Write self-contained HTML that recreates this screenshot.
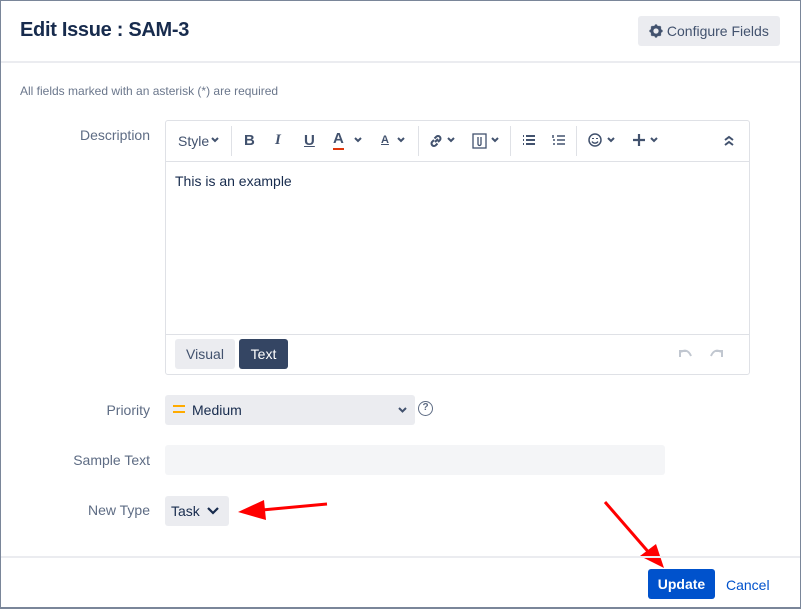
<!DOCTYPE html>
<html><head><style>
*{box-sizing:border-box;margin:0;padding:0}
body{width:801px;height:609px;background:#fff;font-family:"Liberation Sans",sans-serif;color:#172b4d;position:relative;overflow:hidden}
.a{position:absolute}
.lbl{position:absolute;right:651px;font-size:14px;color:#5e6c84;text-align:right}
.ic{position:absolute;top:132px;font-size:15px;color:#42526e;font-weight:bold}
.sep{position:absolute;top:126px;width:1px;height:30px;background:#dfe1e6}
svg.t{position:absolute;top:133px}
svg.t *{fill:none;stroke:#42526e;stroke-width:2}
</style></head><body>
<div class="a" style="left:20px;top:19px;font-size:20px;font-weight:bold;color:#172b4d;letter-spacing:-0.3px">Edit Issue : SAM-3</div>
<div class="a" style="left:638px;top:16px;width:142px;height:30px;background:#ebecf0;border-radius:3px;font-size:14px;color:#42526e;line-height:30px;padding-left:11px">
<svg width="14" height="14" viewBox="0 0 16 16" style="vertical-align:-2px"><circle cx="8" cy="8" r="5" fill="none" stroke="#42526e" stroke-width="3"/><g stroke="#42526e" stroke-width="2.5"><line x1="8" y1="0.5" x2="8" y2="15.5"/><line x1="0.5" y1="8" x2="15.5" y2="8"/><line x1="2.7" y1="2.7" x2="13.3" y2="13.3"/><line x1="13.3" y1="2.7" x2="2.7" y2="13.3"/></g><circle cx="8" cy="8" r="3" fill="#ebecf0"/></svg> Configure Fields</div>
<div class="a" style="left:0;top:61px;width:801px;height:2px;background:#ebecf0"></div>
<div class="a" style="left:20px;top:84px;font-size:12px;color:#6b778c">All fields marked with an asterisk (*) are required</div>

<div class="lbl" style="top:127px">Description</div>
<div class="a" style="left:165px;top:120px;width:585px;height:255px;border:1px solid #dfe1e6;border-radius:3px"></div>
<div class="a" style="left:166px;top:161px;width:583px;height:1px;background:#dfe1e6"></div>
<div class="a" style="left:166px;top:334px;width:583px;height:1px;background:#dfe1e6"></div>
<div class="a" style="left:178px;top:133px;font-size:14px;color:#42526e">Style</div>
<svg class="t" style="left:211px;top:137px" width="8" height="6"><path d="M1 1l3 3 3-3"/></svg>
<div class="sep" style="left:231px"></div>
<div class="ic" style="left:244px">B</div>
<div class="ic" style="left:275px;font-style:italic;font-family:'Liberation Serif',serif">I</div>
<div class="ic" style="left:304px;text-decoration:underline">U</div>
<div class="ic" style="left:333px;border-bottom:2px solid #de350b;line-height:14px;height:18px">A</div>
<svg class="t" style="left:354px;top:137px" width="8" height="6"><path d="M1 1l3 3 3-3"/></svg>
<div class="ic" style="left:381px;font-size:11px;top:134px;text-decoration:underline">A</div>
<svg class="t" style="left:397px;top:137px" width="8" height="6"><path d="M1 1l3 3 3-3"/></svg>
<div class="sep" style="left:418px"></div>
<svg class="t" style="left:428px" width="16" height="16"><path d="M7 9l3-3M6 7l-2 2a2.5 2.5 0 0 0 3.5 3.5l2-2M10 9l2-2a2.5 2.5 0 0 0-3.5-3.5l-2 2"/></svg>
<svg class="t" style="left:447px;top:137px" width="8" height="6"><path d="M1 1l3 3 3-3"/></svg>
<svg class="t" style="left:472px" width="16" height="16"><rect x="1" y="1" width="13" height="14" style="stroke-width:1.3"/><path d="M6 4v7a1.5 1.5 0 0 0 3 0V4" style="stroke-width:1.3"/></svg>
<svg class="t" style="left:491px;top:137px" width="8" height="6"><path d="M1 1l3 3 3-3"/></svg>
<div class="sep" style="left:510px"></div>
<svg class="t" style="left:522px" width="14" height="14"><path d="M1 3h1M1 7h1M1 11h1M4 3h9M4 7h9M4 11h9"/></svg>
<svg class="t" style="left:552px" width="14" height="14"><path d="M5 3h8M5 7h8M5 11h8M1 2v3M1 7h2M1 11h2" style="stroke-width:1.5"/></svg>
<div class="sep" style="left:576px"></div>
<svg class="t" style="left:588px" width="16" height="16"><circle cx="7" cy="7" r="6" style="stroke-width:1.5"/><path d="M4 8.5a3.5 3.5 0 0 0 6 0" style="stroke-width:1.3"/><path d="M5 5v1M9 5v1"/></svg>
<svg class="t" style="left:607px;top:137px" width="8" height="6"><path d="M1 1l3 3 3-3"/></svg>
<svg class="t" style="left:632px" width="16" height="16"><path d="M7 1v12M1 7h12" style="stroke-width:2.2"/></svg>
<svg class="t" style="left:650px;top:137px" width="8" height="6"><path d="M1 1l3 3 3-3"/></svg>
<svg class="t" style="left:724px;top:135px" width="10" height="12"><path d="M1 5l4-3 4 3M1 10l4-3 4 3"/></svg>
<div class="a" style="left:175px;top:173px;font-size:14px;color:#172b4d">This is an example</div>
<div class="a" style="left:175px;top:339px;width:60px;height:30px;background:#ebecf0;border-radius:3px;font-size:14px;line-height:30px;text-align:center;color:#42526e">Visual</div>
<div class="a" style="left:239px;top:339px;width:49px;height:30px;background:#344563;border-radius:3px;font-size:14px;line-height:30px;text-align:center;color:#fff">Text</div>
<svg class="a" style="left:678px;top:347px" width="48" height="12"><g fill="none" stroke="#c1c7d0" stroke-width="2"><path d="M2 10V4h6M3 5c4-3 8-1 10 4"/><path d="M44 10V4h-6M43 5c-4-3-8-1-10 4"/></g></svg>

<div class="lbl" style="top:402px">Priority</div>
<div class="a" style="left:165px;top:395px;width:250px;height:30px;background:#ebecf0;border-radius:3px">
<div class="a" style="left:8px;top:10px;width:12px;height:2px;background:#ffab00"></div>
<div class="a" style="left:8px;top:16px;width:12px;height:2px;background:#ffab00"></div>
<div class="a" style="left:27px;top:7px;font-size:14px">Medium</div>
<svg class="a" style="left:233px;top:12px" width="9" height="6"><path d="M1 1l3.5 3.5L8 1" fill="none" stroke="#42526e" stroke-width="2"/></svg></div>
<div class="a" style="left:418px;top:401px;width:15px;height:15px;border:1.5px solid #5e6c84;border-radius:50%;font-size:10px;text-align:center;line-height:12px;color:#5e6c84;font-weight:bold">?</div>

<div class="lbl" style="top:452px">Sample Text</div>
<div class="a" style="left:165px;top:445px;width:500px;height:30px;background:#f4f5f7;border-radius:3px"></div>

<div class="lbl" style="top:502px">New Type</div>
<div class="a" style="left:165px;top:496px;width:64px;height:30px;background:#ebecf0;border-radius:3px;font-size:14px;line-height:30px;padding-left:6px">Task <svg width="12" height="10" viewBox="0 0 12 10" style="margin-left:3px"><path d="M1 2l5 5 5-5" fill="none" stroke="#172b4d" stroke-width="2.2"/></svg></div>
<svg class="a" style="left:0;top:0" width="801" height="609">
<line x1="327" y1="504" x2="262" y2="510" stroke="#f00" stroke-width="3"/>
<polygon points="238,512 264,500 266,520" fill="#f00"/>
<line x1="605" y1="502" x2="651" y2="555" stroke="#f00" stroke-width="3"/>
<polygon points="664,568 640,556 656,544" fill="#f00"/>
</svg>

<div class="a" style="left:0;top:556px;width:801px;height:2px;background:#ebecf0"></div>
<div class="a" style="left:648px;top:569px;width:67px;height:30px;background:#0052cc;border-radius:3px;color:#fff;font-size:14px;font-weight:bold;line-height:30px;text-align:center">Update</div>
<div class="a" style="left:726px;top:577px;font-size:14px;color:#0052cc">Cancel</div>
<div class="a" style="left:0;top:0;width:801px;height:609px;border:1px solid #7a8699;border-bottom:2px solid #7a8699"></div>
</body></html>
